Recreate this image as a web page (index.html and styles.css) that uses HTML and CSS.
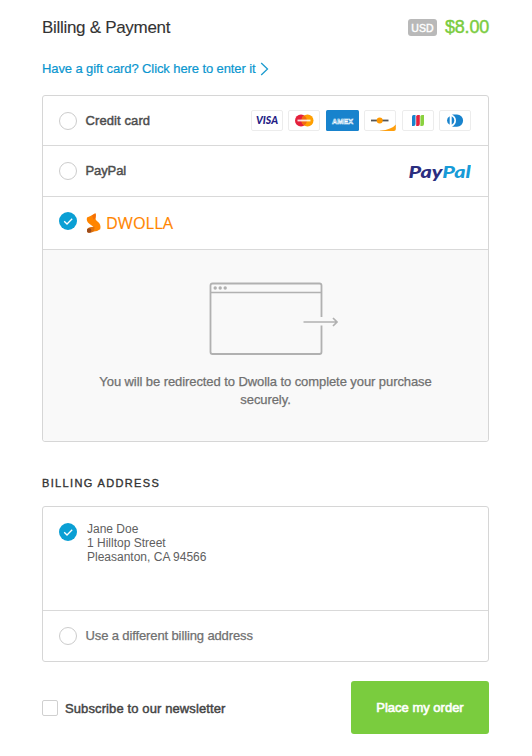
FILE: index.html
```html
<!DOCTYPE html>
<html lang="en">
<head>
<meta charset="utf-8">
<title>Billing &amp; Payment</title>
<link rel="stylesheet" href="styles.css">
</head>
<body>
<main class="checkout">
  <header class="header">
    <h1 class="title">Billing &amp; Payment</h1>
    <div class="total"><span class="currency">USD</span><span class="price">$8.00</span></div>
  </header>
  <a class="gift"><span>Have a gift card? Click here to enter it</span>
    <svg width="9" height="14" viewBox="0 0 9 14"><path d="M1.2 1 7.5 7 1.2 13" fill="none" stroke="#1c9bcf" stroke-width="1.3"/></svg></a>

  <section class="panel">
    <div class="row row-card">
      <span class="radio"></span><span class="label">Credit card</span>
      <div class="cards">
        <svg width="32" height="21" viewBox="0 0 32 21"><rect class="card" x=".5" y=".5" width="31" height="20" rx="1.5"/><text x="5" y="14.2" class="visa" textLength="22" lengthAdjust="spacingAndGlyphs">VISA</text></svg>
        <svg width="32" height="21" viewBox="0 0 32 21"><rect class="card" x=".5" y=".5" width="31" height="20" rx="1.5"/><circle cx="13" cy="10.5" r="6" fill="#e4203c"/><circle cx="19.5" cy="10.5" r="6" fill="#ff9f00"/><path d="M16.2 5.5a6 6 0 0 1 0 10a6 6 0 0 1 0-10" fill="#f26a12"/><path d="M9.5 10.5h13" stroke="#fff" stroke-opacity=".85" stroke-width="1.8"/></svg>
        <svg width="33" height="21" viewBox="0 0 33 21"><rect width="33" height="21" rx="1.5" fill="#1883cd"/><text x="6" y="13.5" class="amex" textLength="21" lengthAdjust="spacingAndGlyphs">AMEX</text></svg>
        <svg width="32" height="21" viewBox="0 0 32 21"><rect class="card" x=".5" y=".5" width="31" height="20" rx="1.5"/><path d="M16 20.8Q28 19.5 31.8 14.5V19q0 2-2 2H16z" fill="#ff9f0d"/><path d="M7 10.5h17.5" stroke="#555" stroke-width="1.8"/><circle cx="15.7" cy="10.5" r="3" fill="#ff9900"/></svg>
        <svg width="32" height="21" viewBox="0 0 32 21"><rect class="card" x=".5" y=".5" width="31" height="20" rx="1.5"/><path d="M11.500 5h2v9q0 2-1.800 2H10V6.500Q10 5 11.500 5z" fill="#1883cd"/><path d="M15.700 5h2.100v9q0 2-1.800 2H14.200V6.500Q14.200 5 15.700 5z" fill="#e4203c"/><path d="M19.900 5H22v9q0 2-1.800 2H18.400V6.500Q18.400 5 19.900 5z" fill="#8ad13f"/></svg>
        <svg width="32" height="21" viewBox="0 0 32 21"><rect class="card" x=".5" y=".5" width="31" height="20" rx="1.5"/><path d="M13 4.500H18a6 6 0 0 1 0 12.200H13q4-2 4-6.100t-4-6.100z" fill="#1883cd"/><path d="M10.700 6.300a4.700 4.700 0 0 0 0 8.500zM12.700 6.300a4.700 4.700 0 0 1 0 8.500z" fill="#1883cd"/></svg>
      </div>
    </div>
    <div class="row row-paypal">
      <span class="radio"></span><span class="label tight">PayPal</span>
      <svg class="paypal" width="66" height="28" viewBox="0 0 66 28"><text x="3.500" y="20.800" class="pp" textLength="62.300" lengthAdjust="spacingAndGlyphs"><tspan fill="#2b2e7f">Pay</tspan><tspan fill="#179bd7">Pal</tspan></text></svg>
    </div>
    <div class="row row-dwolla">
      <svg class="check" width="18" height="18" viewBox="0 0 18 18"><circle cx="9" cy="9" r="9" fill="#0a9fd4"/><path d="M5.200 9.200 8 12 13.200 6.700" fill="none" stroke="#fff" stroke-width="1.300"/></svg>
      <svg class="dwolla" width="90" height="24" viewBox="0 0 90 24"><path d="M1 5.500Q5 4 9.300 1.300Q10.500 3 9.500 6.500Q9.300 8 11.500 9.500Q15.500 12.500 14.200 17.300Q11 19.500 8 19.500L8 15.500Q6.500 14 3 11.500Q0 9 1 5.500z" fill="#ff8500"/><path d="M6 3.300Q8.500 3 9.300 1.300Q10.700 3 9.400 6.500L7.500 7.500z" fill="#f56f08"/><path d="M1 17.500Q2 15 5.500 15L8.500 14.800 8 19.500Q5.500 20.800 2.500 20.800Q.5 20.300 1 17.500z" fill="#e0720c"/><path d="M1 17.500Q2.500 15.500 4.600 16.500Q6 18 5 20.200Q4 20.800 2.500 20.800Q.5 20.300 1 17.500z" fill="#9c4c1c"/><text x="20" y="17.300" class="dw" textLength="67" lengthAdjust="spacingAndGlyphs">DWOLLA</text></svg>
    </div>
    <div class="redirect">
      <svg width="130" height="74" viewBox="0 0 130 74" fill="none" stroke="#b1b1b1" stroke-width="1.800"><path d="M112.500 35V3.500q0-2-2-2H3.500q-2 0-2 2V70q0 2 2 2H110.500q2 0 2-2V43.500"/><path d="M1.500 10.500h111" stroke-width="1.500"/><path d="M94.500 40h33M124 36l4 4-4 4" stroke-width="1.700"/><g fill="#b1b1b1" stroke="none"><circle cx="6.200" cy="6" r="1.700"/><circle cx="11.200" cy="6" r="1.700"/><circle cx="16.200" cy="6" r="1.700"/></g></svg>
      <p>You will be redirected to Dwolla to complete your purchase<br>securely.</p>
    </div>
  </section>

  <h2 class="subtitle">BILLING ADDRESS</h2>
  <section class="panel">
    <div class="address">
      <svg class="check" width="18" height="18" viewBox="0 0 18 18"><circle cx="9" cy="9" r="9" fill="#0a9fd4"/><path d="M5.200 9.200 8 12 13.200 6.700" fill="none" stroke="#fff" stroke-width="1.300"/></svg>
      <address>Jane Doe<br>1 Hilltop Street<br>Pleasanton, CA 94566</address>
    </div>
    <div class="row row-other"><span class="radio"></span><span class="other">Use a different billing address</span></div>
  </section>

  <footer class="footer">
    <label class="subscribe"><span class="box"></span><span class="subscribe-text">Subscribe to our newsletter</span></label>
    <button class="order" type="button">Place my order</button>
  </footer>
</main>
</body>
</html>
```
FILE: styles.css
```css
* { box-sizing: border-box; }
body { margin: 0; background: #fff; font: 13px/18px "Liberation Sans", Arial, sans-serif; color: #555; }
svg { display: block; flex: none; }
.checkout { width: 447px; margin-left: 42px; padding-top: 15px; }
.header { display: flex; justify-content: space-between; align-items: center; height: 24px; }
.title { margin: 0; padding-top: 2px; font-size: 17px; font-weight: 400; color: #333; letter-spacing: -.3px; -webkit-text-stroke: .1px #333; }
.total { display: flex; align-items: center; gap: 8px; }
.currency { width: 29px; height: 17px; border-radius: 3px; background: #b9b9b9; color: #fff; font-size: 10.500px; line-height: 18px; text-align: center; -webkit-text-stroke: .4px #fff; }
.price { color: #7acc3e; font-size: 18px; letter-spacing: -.2px; -webkit-text-stroke: .4px #7acc3e; }
.gift { display: flex; align-items: center; gap: 4px; height: 18px; margin-top: 21px; color: #0a96cf; letter-spacing: -.1px; -webkit-text-stroke: .2px #0a96cf; }
.panel { border: 1px solid #d6d6d6; border-radius: 3px; }
.gift + .panel { margin-top: 17px; }
.row { display: flex; align-items: center; padding: 0 17px 0 16px; border-bottom: 1px solid #d9d9d9; }
.row-card { height: 50px; }
.row-paypal { height: 51px; }
.row-dwolla { height: 53px; align-items: flex-start; padding-top: 15px; }
.row-other { height: 50px; border: 0; }
.radio { width: 18px; height: 18px; border: 1px solid #ccc; border-radius: 50%; margin-right: 8.500px; }
.label { color: #4d4d4d; letter-spacing: .1px; -webkit-text-stroke: .45px #4d4d4d; }
.tight { letter-spacing: -.1px; }
.cards { display: flex; gap: 5.500px; margin-left: auto; }
.card { fill: #fff; stroke: #ececec; }
.visa { font: italic 900 10.500px Lato, sans-serif; fill: #251d85; }
.amex { font: 700 8px "Liberation Sans", sans-serif; fill: #1883cd; stroke: #fff; stroke-width: .6px; }
.paypal { margin-left: auto; }
.pp { font: italic 900 17px Lato, sans-serif; }
.dwolla { margin-left: 9px; }
.dw { font: 400 15.500px "Open Sans", sans-serif; fill: #ff8500; stroke: #ff8500; stroke-width: .15px; }
.redirect { display: flex; flex-direction: column; align-items: center; height: 191px; padding-top: 32px; background: #f9f9f9; border-radius: 0 0 3px 3px; }
.redirect svg { margin-left: 17px; }
.redirect p { margin: 17px 0 0; text-align: center; color: #707070; letter-spacing: -.08px; -webkit-text-stroke: .25px #707070; }
.subtitle { margin: 33px 0 14px; font-size: 11px; line-height: 17px; font-weight: 400; color: #333; letter-spacing: 1.360px; -webkit-text-stroke: .35px #333; }
.address { display: flex; gap: 10px; height: 104px; padding: 16px; border-bottom: 1px solid #d9d9d9; }
.address address { margin-top: -1px; font-size: 12px; line-height: 14px; font-style: normal; color: #606060; }
.other { color: #707070; letter-spacing: -.12px; -webkit-text-stroke: .25px #707070; }
.footer { display: flex; justify-content: space-between; align-items: center; margin-top: 19px; height: 53px; }
.subscribe { display: flex; align-items: center; gap: 7px; color: #444; letter-spacing: .11px; -webkit-text-stroke: .45px #444; }
.subscribe-text { padding-top: 2px; }
.box { width: 16px; height: 16px; border: 1px solid #d0d0d0; border-radius: 2px; }
.order { width: 138px; height: 53px; padding: 0; border: 0; border-radius: 3px; background: #7acc3e; color: #fff; font: inherit; -webkit-text-stroke: .6px #fff; }
```
